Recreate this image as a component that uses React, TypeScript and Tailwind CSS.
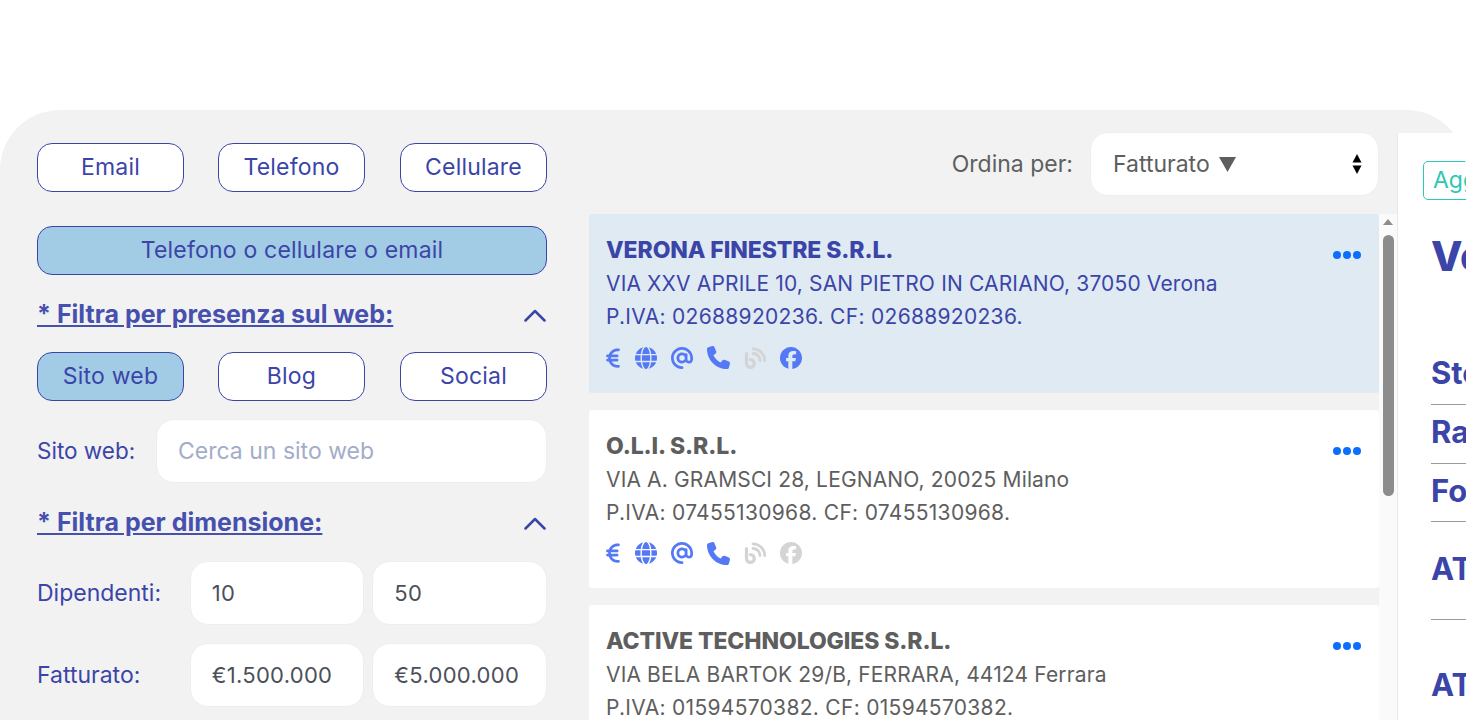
import React from 'react'
import { FaEuroSign, FaGlobe, FaAt, FaPhone, FaFacebook } from 'react-icons/fa6'

const font = { fontFamily: 'Inter, sans-serif' }

const Blog: React.FC<{ className?: string }> = ({ className }) => (
  <svg viewBox="0 0 22 22" className={className} fill="none" stroke="currentColor" strokeLinecap="round">
    <path d="M2.500 6.500v10a3.900 3.900 0 1 0 3.900-3.900" strokeWidth="3.200" />
    <path d="M9 6.500a7 7 0 0 1 7 7" strokeWidth="2.800" />
    <path d="M9 1.800a11.700 11.700 0 0 1 11.700 11.700" strokeWidth="2.800" />
  </svg>
)

const Chevron = () => (
  <svg viewBox="0 0 22 13" className="w-[22px] h-[13px] mr-[1px] text-[#3b45a8]" fill="none" stroke="currentColor" strokeWidth="2.500" strokeLinecap="round" strokeLinejoin="round">
    <path d="M1.500 11.500L11 2l9.500 9.500" />
  </svg>
)

const Toggle: React.FC<{ label: string; active?: boolean; className?: string }> = ({ label, active, className }) => (
  <div
    className={`h-[49px] rounded-[15px] border border-[#3b45a8] flex items-center justify-center text-[#3b45a8] text-[23px] tracking-[0.2px] ${active ? 'bg-[#a2cbe5]' : 'bg-white'} ${className ?? 'w-[147px]'}`}
  >
    {label}
  </div>
)

const Field: React.FC<{ value: string; w: string; muted?: boolean }> = ({ value, w, muted }) => (
  <div className={`h-[64px] ${w} bg-white rounded-[18px] border border-[#eeeef2] pl-[21px] flex items-center ${muted ? 'text-[#a3acc9] text-[23px]' : 'text-[#4c5058] text-[22px] tracking-[0.3px]'}`}>
    {value}
  </div>
)

interface Company {
  name: string
  address: string
  tax: string
  fb: boolean
  selected?: boolean
}

const companies: Company[] = [
  {
    name: 'VERONA FINESTRE S.R.L.',
    address: 'VIA XXV APRILE 10, SAN PIETRO IN CARIANO, 37050 Verona',
    tax: 'P.IVA: 02688920236. CF: 02688920236.',
    fb: true,
    selected: true,
  },
  {
    name: 'O.L.I. S.R.L.',
    address: 'VIA A. GRAMSCI 28, LEGNANO, 20025 Milano',
    tax: 'P.IVA: 07455130968. CF: 07455130968.',
    fb: false,
  },
  {
    name: 'ACTIVE TECHNOLOGIES S.R.L.',
    address: 'VIA BELA BARTOK 29/B, FERRARA, 44124 Ferrara',
    tax: 'P.IVA: 01594570382. CF: 01594570382.',
    fb: false,
  },
]

const CompanyCard: React.FC<{ c: Company }> = ({ c }) => (
  <div className={`h-[178.5px] shrink-0 rounded-[3px] pl-[17px] pr-[18px] pt-[20px] flex justify-between ${c.selected ? 'bg-[#e0eaf3] text-[#3b45a8]' : 'bg-white text-[#5e5e5e]'}`}>
    <div>
      <div className="text-[23px] leading-[33px] font-extrabold tracking-[-0.1px]">{c.name}</div>
      <div className="text-[21px] leading-[33px] tracking-[0.15px]">{c.address}</div>
      <div className="text-[21px] leading-[33px] tracking-[0.3px]">{c.tax}</div>
      <div className="flex items-center gap-[14px] mt-[13px] text-[#5579f5]">
        <FaEuroSign className="w-[14px] h-[22px]" />
        <FaGlobe className="w-[22px] h-[22px] ml-[1px]" />
        <FaAt className="w-[22px] h-[22px]" />
        <FaPhone className="w-[23px] h-[23px]" />
        <Blog className="w-[22px] h-[22px] text-[#d4d4d4]" />
        <FaFacebook className={`w-[22px] h-[22px] ${c.fb ? '' : 'text-[#d4d4d4]'}`} />
      </div>
    </div>
    <div className="flex gap-[2px] mt-[17px]">
      <span className="w-[8px] h-[8px] rounded-full bg-[#0d6efd]" />
      <span className="w-[8px] h-[8px] rounded-full bg-[#0d6efd]" />
      <span className="w-[8px] h-[8px] rounded-full bg-[#0d6efd]" />
    </div>
  </div>
)

const Detail: React.FC<{ label: string; h: string }> = ({ label, h }) => (
  <div className={`${h} border-b border-[#9a9a9a] flex items-center pb-[2px] text-[#3b45a8] text-[31px] font-bold whitespace-nowrap`}>
    {label}
  </div>
)

export default function App() {
  return (
    <div style={font} className="w-[1466px] h-[720px] overflow-hidden bg-white pt-[110px]">
      <div className="h-[610px] bg-[#f2f2f3] rounded-t-[60px] flex overflow-hidden">
        {/* Filters */}
        <div className="w-[510px] ml-[37px] shrink-0 pt-[33px]">
          <div className="flex gap-[34px]">
            <Toggle label="Email" />
            <Toggle label="Telefono" />
            <Toggle label="Cellulare" className="w-[147px] ml-[1px]" />
          </div>
          <Toggle label="Telefono o cellulare o email" active className="w-full mt-[34px]" />
          <div className="flex items-center justify-between mt-[25px] h-[30px]">
            <span className="text-[#4650ae] text-[25px] font-bold underline">* Filtra per presenza sul web:</span>
            <Chevron />
          </div>
          <div className="flex gap-[34px] mt-[22px]">
            <Toggle label="Sito web" active />
            <Toggle label="Blog" />
            <Toggle label="Social" className="w-[147px] ml-[1px]" />
          </div>
          <div className="flex items-center justify-between mt-[18px]">
            <span className="text-[#3b45a8] text-[22.500px]">Sito web:</span>
            <Field value="Cerca un sito web" w="w-[391px]" muted />
          </div>
          <div className="flex items-center justify-between mt-[25px] h-[30px]">
            <span className="text-[#4650ae] text-[25px] font-bold underline">* Filtra per dimensione:</span>
            <Chevron />
          </div>
          <div className="flex items-center mt-[23px]">
            <span className="text-[#3b45a8] text-[23px] w-[153px]">Dipendenti:</span>
            <Field value="10" w="w-[175px] mr-[8px]" />
            <Field value="50" w="w-[175px]" />
          </div>
          <div className="flex items-center mt-[18px]">
            <span className="text-[#3b45a8] text-[23px] w-[153px]">Fatturato:</span>
            <Field value="€1.500.000" w="w-[175px] mr-[8px]" />
            <Field value="€5.000.000" w="w-[175px]" />
          </div>
        </div>

        {/* Results */}
        <div className="w-[808px] ml-[42px] shrink-0 pt-[22px]">
          <div className="flex items-center justify-end gap-[17px] pr-[18px]">
            <span className="text-[#5e5e5e] text-[23px]">Ordina per:</span>
            <div className="w-[289px] h-[64px] bg-white rounded-[18px] border border-[#eeeef2] pl-[22px] pr-[16px] flex items-center justify-between text-[#5e5e5e] text-[23px]">
              <span className="flex items-center">
                Fatturato
                <svg viewBox="0 0 17 15" className="w-[17px] h-[15px] ml-[9px]" fill="currentColor">
                  <path d="M0 0h17l-8.500 15z" />
                </svg>
              </span>
              <svg viewBox="0 0 10 20" className="w-[10px] h-[20px] text-black" fill="currentColor">
                <path d="M5 0l4.500 8.500h-9z" />
                <path d="M5 20l4.500-8.500h-9z" />
              </svg>
            </div>
          </div>
          <div className="flex mt-[18px] h-[510px]">
            <div className="w-[790px] flex flex-col gap-[17px] shrink-0">
              {companies.map((c) => (
                <CompanyCard key={c.name} c={c} />
              ))}
            </div>
            <div className="w-[18px] bg-[#fafafa] flex flex-col items-center pt-[5px]">
              <svg viewBox="0 0 10 6" className="w-[10px] h-[6px] text-[#8c8c8c]" fill="currentColor">
                <path d="M5 0l5 6h-10z" />
              </svg>
              <div className="w-[11px] h-[261px] mt-[10px] rounded-full bg-[#8c8c8c]" />
            </div>
          </div>
        </div>

        {/* Detail panel */}
        <div className="flex-1 min-w-0 mt-[23px] bg-white border-l border-[#e8e8ee] overflow-hidden pl-[25px]">
          <div className="w-max h-[39px] mt-[28px] border-[1.500px] border-[#2cc8b4] rounded-[5px] px-[9px] flex items-center text-[#2cc8b4] text-[23px]">Aggiorna</div>
          <div className="ml-[8px] mt-[26px] text-[#3b45a8] text-[41px] font-extrabold whitespace-nowrap">Verona Finestre</div>
          <div className="ml-[8px] mt-[58px] w-[300px]">
            <Detail label="Storico" h="h-[59px]" />
            <Detail label="Ragione" h="h-[59px]" />
            <Detail label="Forma" h="h-[58px]" />
            <Detail label="ATECO" h="h-[98px]" />
            <Detail label="ATECO" h="h-[135px]" />
          </div>
        </div>
      </div>
    </div>
  )
}
